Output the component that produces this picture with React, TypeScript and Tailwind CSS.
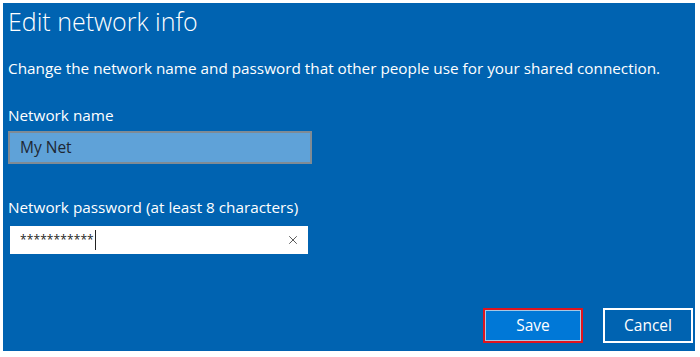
import { X } from 'lucide-react'

export default function App() {
  return (
    <div className="h-[357px] w-[700px] bg-white p-[3px] pr-[5px] pb-[6px] font-['Open_Sans',sans-serif]">
      <div className="flex h-full w-full flex-col bg-[#0063b1] pl-[5px] pr-[2px] text-white">
        <h1 className="mt-[3px] text-[25px] font-light leading-[30px]">Edit network info</h1>

        <p className="mt-[22px] text-[15.3px] leading-[20px]">
          Change the network name and password that other people use for your shared connection.
        </p>

        <label className="mt-[27px] text-[15.3px] leading-[20px]">Network name</label>
        <div className="mt-[6px] flex h-[33px] w-[304px] items-center border-2 border-[#7f8b95] bg-[#5fa2d8] px-[10px] text-[15.5px] text-[#1d2733]">
          My Net
        </div>

        <label className="mt-[33px] text-[15.3px] leading-[20px]">Network password (at least 8 characters)</label>
        <div className="mt-[7px] flex h-[32px] w-[302px] items-center border-2 border-[#0063b1] bg-white pl-[10px] pr-[8px] text-[#222]">
          <span className="text-[12px] tracking-[0.1px]">***********</span>
          <span className="ml-[1px] h-[20px] w-px bg-[#222]" />
          <X className="ml-auto h-[14px] w-[14px] text-[#444]" strokeWidth={1.5} />
        </div>

        <div className="mt-auto mb-[8px] flex justify-end gap-[20px]">
          <button className="flex h-[35px] w-[100px] items-center justify-center border-2 border-[#e0141e] bg-[#0078d7] text-[15.5px] outline outline-1 -outline-offset-[3px] outline-[#a9c6e3]">
            Save
          </button>
          <button className="flex h-[35px] w-[90px] items-center justify-center border-2 border-white bg-[#0063b1] text-[15.5px]">
            Cancel
          </button>
        </div>
      </div>
    </div>
  )
}
